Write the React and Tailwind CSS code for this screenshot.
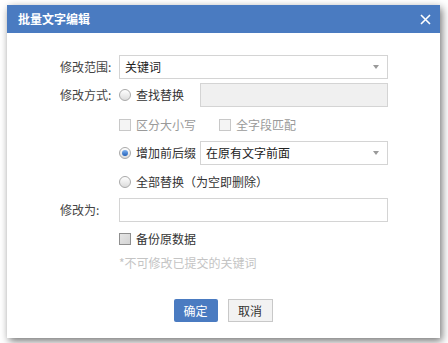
import React from "react";

const font = { fontFamily: '"Noto Sans CJK SC", "Noto Sans", sans-serif' };

function Radio({ checked, label }) {
  return (
    <label className="flex items-center gap-[5px] text-[12px] text-[#333]">
      <span className="flex h-[12px] w-[12px] items-center justify-center rounded-full border border-[#a9a9a9] bg-gradient-to-b from-white to-[#dcdcdc]">
        {checked ? (
          <span className="h-[6px] w-[6px] rounded-full bg-gradient-to-b from-[#7fb2f0] to-[#1f5fb8]" />
        ) : null}
      </span>
      {label}
    </label>
  );
}

function Check({ label, disabled }) {
  return (
    <label
      className={`flex items-center gap-[5px] text-[12px] ${
        disabled ? "text-[#9a9a9a]" : "text-[#333]"
      }`}
    >
      <span
        className={`h-[12px] w-[12px] border ${
          disabled
            ? "border-[#c8c8c8] bg-[#f4f4f4]"
            : "border-[#8f8f8f] bg-gradient-to-br from-[#e6e6e6] to-[#d4d4d4]"
        }`}
      />
      {label}
    </label>
  );
}

function Select({ value, className = "" }) {
  return (
    <div
      className={`flex h-[24px] items-center justify-between border border-[#d4d4d4] bg-white pl-[5px] pr-[8px] text-[12px] text-[#222] ${className}`}
    >
      <span>{value}</span>
      <span className="h-0 w-0 border-x-[3px] border-t-[4px] border-x-transparent border-t-[#9a9a9a]" />
    </div>
  );
}

export default function App() {
  return (
    <div className="h-[343px] w-[448px] overflow-hidden bg-white pl-[7px] pt-[5px]" style={font}>
      <div className="flex h-[333px] w-[433px] flex-col bg-white shadow-[2px_3px_8px_rgba(0,0,0,0.55)]">
        {/* HEADER */}
        <div className="flex h-[28px] items-center justify-between bg-[#4a7bc1] pl-[11px] pr-[8px]">
          <span className="text-[12px] font-bold text-white">批量文字编辑</span>
          <svg width="11" height="11" viewBox="0 0 11 11" className="mr-[1px]">
            <path d="M1 1 L10 10 M10 1 L1 10" stroke="white" strokeWidth="1.6" />
          </svg>
        </div>

        {/* BODY */}
        <div className="flex flex-col pl-[53px] pr-[52px] pt-[22px]">
          <div className="flex h-[24px] items-center">
            <span className="w-[59px] text-[12px] text-[#444]">修改范围:</span>
            <Select value="关键词" className="flex-1" />
          </div>

          <div className="mt-[4px] flex h-[24px] items-center">
            <span className="w-[59px] text-[12px] text-[#444]">修改方式:</span>
            <div className="w-[81px]">
              <Radio label="查找替换" />
            </div>
            <div className="h-[24px] flex-1 border border-[#d4d4d4] bg-[#f0f0f0]" />
          </div>

          <div className="mt-[6px] flex h-[24px] items-center pl-[59px]">
            <div className="w-[100px]">
              <Check label="区分大小写" disabled />
            </div>
            <Check label="全字段匹配" disabled />
          </div>

          <div className="mt-[4px] flex h-[24px] items-center pl-[59px]">
            <div className="w-[81px]">
              <Radio checked label="增加前后缀" />
            </div>
            <Select value="在原有文字前面" className="flex-1" />
          </div>

          <div className="mt-[5px] flex h-[24px] items-center pl-[59px]">
            <Radio label="全部替换（为空即删除）" />
          </div>

          <div className="mt-[4px] flex h-[24px] items-center">
            <span className="w-[59px] text-[12px] text-[#444]">修改为:</span>
            <div className="h-[24px] flex-1 border border-[#d4d4d4] bg-white" />
          </div>

          <div className="mt-[5px] flex h-[24px] items-center pl-[59px]">
            <Check label="备份原数据" />
          </div>

          <div className="mt-[1px] flex h-[22px] items-center pl-[59px] text-[12px] text-[#c4c4c4]">
            *不可修改已提交的关键词
          </div>
        </div>

        {/* FOOTER */}
        <div className="mt-[25px] flex justify-center gap-[10px] pr-[1px]">
          <button
            type="button"
            className="h-[23px] w-[44px] rounded-[2px] bg-[#4a7bc1] text-[12px] text-white"
          >
            确定
          </button>
          <button
            type="button"
            className="h-[23px] w-[45px] border border-[#c8c8c8] bg-[#f2f2f2] text-[12px] text-[#333]"
          >
            取消
          </button>
        </div>
      </div>
    </div>
  );
}
